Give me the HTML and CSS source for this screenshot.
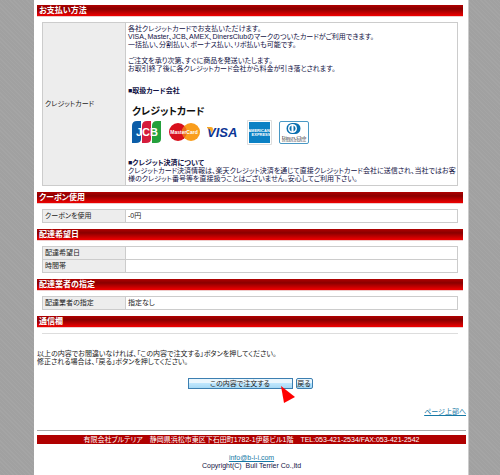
FILE: index.html
```html
<!DOCTYPE html>
<html lang="ja">
	<head>
		<meta charset="UTF-8">
		<title>ご注文内容の確認</title>
		<link rel="stylesheet" href="styles.css">
	</head>
	<body>
		<div class="page">
			<form class="order">
				<h2>お支払い方法</h2>
				<table>
					<tr>
						<th scope="row">クレジットカード</th>
						<td class="payment">
							<p>各社クレジットカードでお支払いただけます。<br>VISA、Master、JCB、AMEX、DinersClubのマークのついたカードがご利用できます。<br>一括払い、分割払い、ボーナス払い、リボ払いも可能です。</p>
							<p>ご注文を承り次第、すぐに商品を発送いたします。<br>お取引終了後に各クレジットカード会社から料金が引き落とされます。</p>
							<h3 class="brands-title">■取扱カード会社</h3>
							<div class="brands">
								<h4>クレジットカード</h4>
								<div class="logos">
									<svg class="jcb" width="30" height="23" viewBox="0 0 30 23">
										<path fill="#0b5da8" d="M0 5Q0 0 5 0H9V18Q9 22 4 22H0Z"/>
										<path fill="#d51c3c" d="M10 5Q10 0 15 0H19V18Q19 22 14 22H10Z"/>
										<path fill="#25a03c" d="M20 5Q20 0 25 0H29V18Q29 22 24 22H20Z"/>
										<text x="15" y="15" text-anchor="middle" font-size="11">JCB</text>
									</svg>
									<svg class="master" width="31" height="19" viewBox="0 0 31 19">
										<circle cx="9" cy="9" r="9" fill="#d8101c"/>
										<circle cx="22" cy="9" r="9" fill="#f99d1c"/>
										<path fill="#ee6a1c" d="M15.500 3A9 9 0 0 1 15.500 15A9 9 0 0 1 15.500 3Z"/>
										<text x="15" y="11" text-anchor="middle" font-size="5">MasterCard</text>
									</svg>
									<svg class="visa" width="33" height="13" viewBox="0 0 33 13">
										<text x="0" y="11" font-size="13">VISA</text>
										<path fill="#f7a823" d="M0 1H4Q6 1 6 3L5 8Q4 3 0 2Z"/>
									</svg>
									<svg class="amex" width="25" height="25" viewBox="0 0 25 25">
										<path fill="#fff" stroke="#ddd" d="M.5.5H24.500V24.500H.5Z"/>
										<path fill="#0c81c4" d="M2 2H23V23H2Z"/>
										<text x="12" y="12" text-anchor="middle" font-size="4">AMERICAN</text>
										<text x="14" y="16" text-anchor="middle" font-size="4">EXPRESS</text>
									</svg>
									<svg class="diners" width="31" height="24" viewBox="0 0 31 24">
										<rect x=".5" y=".5" width="29" height="22" rx="1.500" fill="#fff" stroke="#4a98c4"/>
										<path fill="#0a70b0" d="M13 2H16A5.500 5.500 0 0 1 16 13H13A5.500 5.500 0 0 1 13 2Z"/>
										<circle cx="13.500" cy="7.500" r="4.500" fill="#fff"/>
										<path fill="#0a70b0" d="M12.500 4.500A3.200 3.200 0 0 0 12.500 10.500ZM14.500 4.500A3.200 3.200 0 0 1 14.500 10.500Z"/>
										<text x="15" y="18" text-anchor="middle" font-size="5">Diners Club</text>
										<text x="15" y="21" text-anchor="middle" font-size="3">INTERNATIONAL</text>
									</svg>
								</div>
							</div>
							<h3>■クレジット決済について</h3>
							<div>クレジットカード決済情報は、楽天クレジット決済を通じて直接クレジットカード会社に送信され、当社ではお客様のクレジット番号等を直接扱うことはございません。安心してご利用下さい。</div>
						</td>
					</tr>
				</table>
				<h2>クーポン使用</h2>
				<table>
					<tr><th scope="row">クーポンを使用</th><td>-0円</td></tr>
				</table>
				<h2>配達希望日</h2>
				<table>
					<tr><th scope="row">配達希望日</th><td></td></tr>
					<tr><th scope="row">時間帯</th><td></td></tr>
				</table>
				<h2>配達業者の指定</h2>
				<table>
					<tr><th scope="row">配達業者の指定</th><td>指定なし</td></tr>
				</table>
				<h2>通信欄</h2>
				<hr class="memo">
				<p class="note">以上の内容でお間違いなければ、「この内容で注文する」ボタンを押してください。<br>修正される場合は、「戻る」ボタンを押してください。</p>
				<div class="buttons">
					<div class="submit">
						<button type="submit" class="btn btn-order">この内容で注文する</button>
						<svg class="pointer" width="14" height="17" viewBox="0 0 14 17"><path fill="#f00" d="M0 0L14 11L3 17Z"/></svg>
					</div>
					<button type="button" class="btn btn-back">戻る</button>
				</div>
			</form>
			<div class="totop"><a href="#">ページ上部へ</a></div>
			<hr>
			<div class="footer">
				<address>有限会社ブルテリア　静岡県浜松市東区下石田町1782-1伊藤ビル1階　TEL:053-421-2534/FAX:053-421-2542</address>
				<a href="mailto:info@b-i-i.com">info@b-i-i.com</a>
				<div class="copy">Copyright(C)&nbsp; Bull Terrier Co.,ltd</div>
			</div>
		</div>
	</body>
</html>
```
FILE: styles.css
```css
*{
	box-sizing: border-box;
}
body{
	margin: 0;
	background: repeating-linear-gradient(45deg, #a5a5a5 0, #a5a5a5 1px, #a1a1a1 1px, #a1a1a1 3px);
	font: 7px/8px "Liberation Sans", "Noto Sans CJK JP", sans-serif;
	font-feature-settings: "palt";
	color: #222;
}
.page{
	margin: 0 31px 0 34px;
	padding: 5px 2px 4px 3px;
	min-height: 100vh;
	background: #fff;
	border-right: 1px solid #ccc;
}
h2,h3,h4,p{
	margin: 0;
	font-size: inherit;
}
.order{
	margin-right: 3px;
}
h2{
	height: 12px;
	padding-left: 2px;
	border-bottom: 1px solid #ecc;
	background: linear-gradient(#b00000, #8a0000 35%, #f00000);
	color: #fff;
	font-size: 8px;
	line-height: 11px;
}
table{
	width: calc(100% - 10px);
	margin: 5px 5px 6px;
	border-collapse: collapse;
	table-layout: fixed;
}
th,td{
	height: 13px;
	padding: 2px 0 2px 2px;
	border: 1px solid #ccc;
	text-align: left;
	font-weight: normal;
}
th{
	width: 20%;
	background: #ededed;
}
.payment{
	color: #114;
}
.payment p{
	margin-bottom: 8px;
}
.payment .brands-title{
	margin: 14px 0 12px;
}
.brands{
	padding: 0 4px;
	margin-bottom: 14px;
}
.brands h4{
	margin-bottom: 3px;
	font-size: 10px;
	line-height: 10px;
	color: #111;
}
.logos{
	display: flex;
	align-items: center;
	height: 25px;
	gap: 7px;
}
.logos text{
	font-family: "Liberation Sans", sans-serif;
	font-weight: bold;
	fill: #fff;
}
.logos .visa text{
	font-style: italic;
	fill: #0c3595;
}
.logos .diners text{
	font-family: "Liberation Serif", serif;
	font-weight: normal;
	fill: #222;
}
hr{
	height: 1px;
	margin: 0;
	border: 0;
	background: #aaa;
}
.memo{
	margin: 5px 5px 16px;
	background: #ddd;
}
.buttons{
	display: flex;
	justify-content: center;
	gap: 3px;
	margin: 12px 0 19px;
}
.submit{
	position: relative;
}
.btn{
	display: block;
	height: 11px;
	padding: 0;
	border: 1px solid #3c7fb1;
	background: linear-gradient(#eaf6fd 45%, #bee6fd 50%, #a7d9f5);
	color: #222;
	font: inherit;
	line-height: 8px;
}
.btn-order{
	width: 105px;
}
.btn-back{
	width: 17px;
	border-radius: 2px;
}
.pointer{
	position: absolute;
	top: 8px;
	left: 93px;
}
.totop{
	margin-bottom: 14px;
	text-align: right;
}
a{
	color: #1678a5;
}
.footer{
	padding-top: 4px;
	text-align: center;
	color: #114;
}
.footer address{
	margin-bottom: 10px;
	background: #b00000;
	color: #fff;
	font-style: normal;
	line-height: 9px;
}
```
